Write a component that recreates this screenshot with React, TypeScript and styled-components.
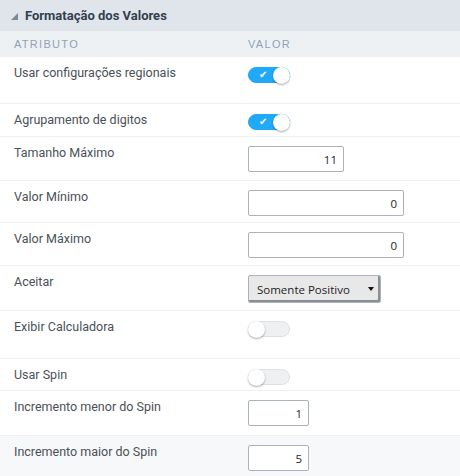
import React from 'react';
import styled, { createGlobalStyle } from 'styled-components';

const GlobalStyle = createGlobalStyle`
	body {
		margin: 0;
		background: #ffffff;
		font-family: Roboto, 'Liberation Sans', Arial, sans-serif;
	}
`;

const Panel = styled.div`
	width: 460px;
	background: #ffffff;
`;

const Header = styled.div`
	height: 31px;
	display: flex;
	align-items: center;
	gap: 7px;
	padding-left: 11px;
	background: #e0e5eb;
	box-sizing: border-box;
	color: #33404d;
	font-size: 13px;
	font-weight: bold;
`;

const Caret = styled.span`
	width: 0;
	height: 0;
	border-left: 7px solid transparent;
	border-bottom: 7px solid #7d8894;
	margin-top: 1px;
`;

const Row = styled.div<{ $h: number; $shaded?: boolean }>`
	display: grid;
	grid-template-columns: 234px 1fr;
	height: ${(p) => p.$h}px;
	box-sizing: border-box;
	padding-left: 14px;
	border-bottom: 1px solid #eef0f3;
	background: ${(p) => (p.$shaded ? '#f7f8fa' : '#ffffff')};
`;

const HeadRow = styled(Row)`
	background: #eef1f4;
	border-bottom: none;
	align-items: center;
	color: #8ea3b6;
	font-family: 'Liberation Sans', Arial, sans-serif;
	font-size: 11px;
	letter-spacing: 1.3px;
`;

const Label = styled.div`
	padding-top: 8px;
	color: #4a5158;
	font-size: 12.5px;
	line-height: 16px;
`;

const Value = styled.div`
	padding-top: 9px;
`;

const ToggleValue = styled.div`
	padding-top: 10px;
`;

const Input = styled.div<{ $w: number }>`
	width: ${(p) => p.$w}px;
	height: 26px;
	box-sizing: border-box;
	border: 1px solid #aab3bd;
	border-radius: 2px;
	background: #ffffff;
	display: flex;
	align-items: center;
	justify-content: flex-end;
	padding-right: 6px;
	font-family: 'Open Sans', 'Noto Sans', sans-serif;
	font-size: 11.5px;
	color: #1e1e1e;
`;

const Select = styled.div`
	width: 133px;
	height: 28px;
	box-sizing: border-box;
	border: 1px solid #aab3bd;
	border-radius: 2px;
	background: #e8e8e8;
	box-shadow: inset -2px -2px 0 #8a8f94;
	display: flex;
	align-items: center;
	justify-content: space-between;
	padding: 0 6px 0 8px;
	font-family: 'Open Sans', 'Noto Sans', sans-serif;
	font-size: 11.5px;
	color: #1e1e1e;
`;

const Arrow = styled.span`
	width: 0;
	height: 0;
	margin-top: -1px;
	border-left: 3px solid transparent;
	border-right: 3px solid transparent;
	border-top: 4px solid #111111;
`;

const Track = styled.div<{ $on: boolean }>`
	position: relative;
	width: 42px;
	height: 16px;
	box-sizing: border-box;
	border-radius: 8px;
	background: ${(p) => (p.$on ? '#1fa9f6' : '#eef0f2')};
	border: 1px solid ${(p) => (p.$on ? '#1fa9f6' : '#dde1e5')};
`;

const Knob = styled.span<{ $on: boolean }>`
	position: absolute;
	top: -1.5px;
	${(p) => (p.$on ? 'right: -1px;' : 'left: -1px;')}
	width: 17px;
	height: 17px;
	border-radius: 50%;
	background: #ffffff;
	box-shadow: 0 1px 2px rgba(0, 0, 0, 0.35);
`;

const Check = styled.span`
	position: absolute;
	left: 10px;
	top: 0px;
	color: #ffffff;
	font-size: 10px;
	line-height: 14px;
	font-family: 'DejaVu Sans', sans-serif;
`;

const Toggle = ({ on }: { on: boolean }) => (
	<Track $on={on}>
		{on && <Check>✔</Check>}
		<Knob $on={on} />
	</Track>
);

type Field =
	| { label: string; h: number; kind: 'toggle'; on: boolean; shaded?: boolean }
	| { label: string; h: number; kind: 'input'; value: string; w: number; shaded?: boolean }
	| { label: string; h: number; kind: 'select'; value: string; shaded?: boolean };

const fields: Field[] = [
	{ label: 'Usar configurações regionais', h: 47, kind: 'toggle', on: true },
	{ label: 'Agrupamento de digitos', h: 33, kind: 'toggle', on: true },
	{ label: 'Tamanho Máximo', h: 44, kind: 'input', value: '11', w: 96 },
	{ label: 'Valor Mínimo', h: 42, kind: 'input', value: '0', w: 156 },
	{ label: 'Valor Máximo', h: 43, kind: 'input', value: '0', w: 156 },
	{ label: 'Aceitar', h: 45, kind: 'select', value: 'Somente Positivo' },
	{ label: 'Exibir Calculadora', h: 48, kind: 'toggle', on: false },
	{ label: 'Usar Spin', h: 32, kind: 'toggle', on: false },
	{ label: 'Incremento menor do Spin', h: 45, kind: 'input', value: '1', w: 61 },
	{ label: 'Incremento maior do Spin', h: 45, kind: 'input', value: '5', w: 61, shaded: true }
];

const App = () => (
	<>
		<GlobalStyle />
		<Panel>
			<Header>
				<Caret />
				<span>Formatação dos Valores</span>
			</Header>
			<HeadRow $h={26}>
				<span>ATRIBUTO</span>
				<span>VALOR</span>
			</HeadRow>
			{fields.map((f) => (
				<Row key={f.label} $h={f.h} $shaded={f.shaded}>
					<Label>{f.label}</Label>
					{f.kind === 'toggle' ? (
						<ToggleValue>
							<Toggle on={f.on} />
						</ToggleValue>
					) : (
						<Value>
							{f.kind === 'input' ? (
								<Input $w={f.w}>{f.value}</Input>
							) : (
								<Select>
									<span>{f.value}</span>
									<Arrow />
								</Select>
							)}
						</Value>
					)}
				</Row>
			))}
		</Panel>
	</>
);

export default App;
